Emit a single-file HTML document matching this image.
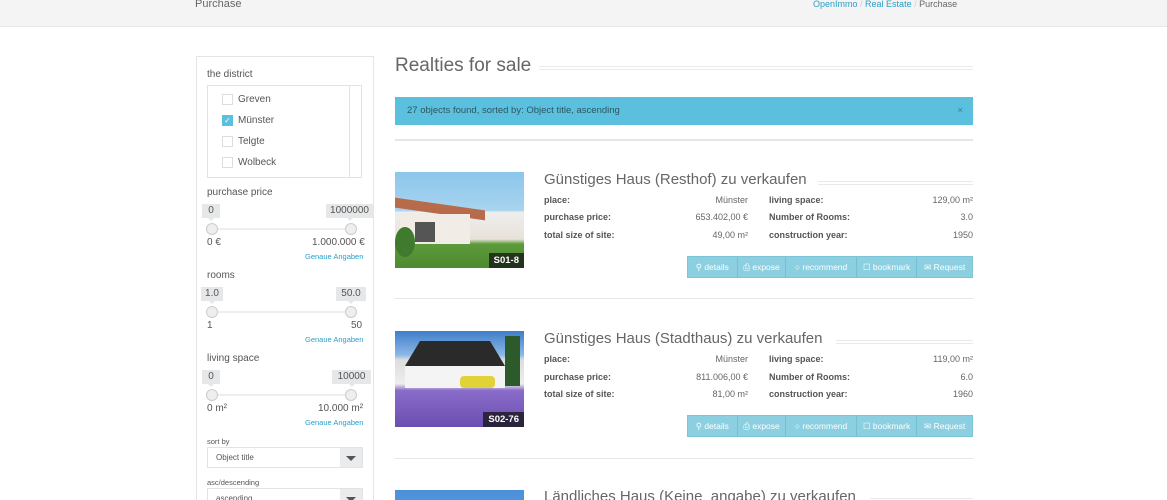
<!DOCTYPE html>
<html><head><meta charset="utf-8"><style>
*{box-sizing:border-box;margin:0;padding:0}
html,body{width:1167px;height:500px;overflow:hidden}
body{background:#fff;font-family:"Liberation Sans",sans-serif;color:#555;position:relative}
.top{position:absolute;left:0;top:0;width:1167px;height:27px;background:#f4f4f4;border-bottom:1px solid #e8e8e8}
.abs{position:absolute;white-space:nowrap}
.side{position:absolute;left:196px;top:56px;width:178px;height:460px;border:1px solid #e5e5e5}
.lbl{font-size:10px;color:#555}
.dist{position:absolute;left:207px;top:85px;width:155px;height:93px;border:1px solid #e3e3e3}
.dist .sb{position:absolute;right:0;top:0;width:12px;height:91px;border-left:1px solid #e3e3e3}
.cb{position:absolute;width:11px;height:11px;border:1px solid #ddd;background:#fff}
.tag{position:absolute;background:#e5e7e8;font-size:10px;color:#555;height:14px;line-height:14px;text-align:center}
.tag:after{content:"";position:absolute;left:50%;margin-left:-3px;bottom:-3px;border:3px solid transparent;border-top-color:#e5e7e8;border-bottom:0}
.track{position:absolute;height:2px;background:#eee}
.knob{position:absolute;width:12px;height:12px;border-radius:50%;background:#eee;border:1px solid #ccc}
.link{font-size:7.5px;color:#2a9fc9}
.sel{position:absolute;left:207px;width:156px;height:21px;border:1px solid #e3e3e3;font-size:8px;line-height:19px;padding-left:8px;color:#555}
.sel .ar{position:absolute;right:0;top:0;width:22px;height:19px;background:#e9ebec}
.sel .ar:after{content:"";position:absolute;left:6px;top:8px;border:5px solid transparent;border-top:5px solid #555}
.h2{font-size:19px;color:#666}
.dbl{position:absolute;height:4px;border-top:1px solid #eaeaea;border-bottom:1px solid #eaeaea}
.alert{position:absolute;left:395px;top:97px;width:578px;height:28px;background:#5bc0de;font-size:9.5px;color:#2d5563;line-height:28px;padding-left:12px}
.hr{position:absolute;left:395px;width:578px;height:1px;background:#e6e6e6}
.img{position:absolute;left:395px;width:129px;height:96px;overflow:hidden}
.code{position:absolute;right:0;bottom:0;background:rgba(20,20,20,.75);color:#fff;font-size:9.5px;padding:2px 5px;font-weight:bold}
.title{font-size:15px;color:#666}
.k{font-size:9px;font-weight:bold;color:#555}
.v{font-size:9px;color:#666;text-align:right}
.btns{position:absolute;left:687px;width:286px;height:22px;background:#8bcfe0;display:flex;font-size:8.5px;color:#fff;border:1px solid #7cc5d8}
.btns div{border-right:1px solid #75bfd3;line-height:20px;text-align:center}
.btns div:last-child{border-right:0}
</style></head><body>
<div class="top"></div>
<div class="abs" style="left:195px;top:-2px;font-size:11px;color:#666">Purchase</div>
<div class="abs" style="left:813px;top:-1px;font-size:9px;color:#2a9fc9">OpenImmo <span style="color:#ccc">/</span> Real Estate <span style="color:#ccc">/</span> <span style="color:#666">Purchase</span></div>

<div class="side"></div>
<div class="abs lbl" style="left:207px;top:69px">the district</div>
<div class="dist"><div class="sb"></div></div>
<div class="cb" style="left:222px;top:94px"></div><div class="abs lbl" style="left:238px;top:94px">Greven</div>
<div class="cb" style="left:222px;top:115px;background:#5bc0de;border-color:#5bc0de;color:#fff;font-size:8px;line-height:9px;text-align:center">✓</div><div class="abs lbl" style="left:238px;top:115px">Münster</div>
<div class="cb" style="left:222px;top:136px"></div><div class="abs lbl" style="left:238px;top:136px">Telgte</div>
<div class="cb" style="left:222px;top:157px"></div><div class="abs lbl" style="left:238px;top:157px">Wolbeck</div>

<div class="abs lbl" style="left:207px;top:187px">purchase price</div>
<div class="tag" style="left:202px;top:204px;width:18px">0</div><div class="tag" style="left:326px;top:204px;width:47px">1000000</div>
<div class="track" style="left:212px;top:228px;width:140px"></div>
<div class="knob" style="left:206px;top:223px"></div><div class="knob" style="left:345px;top:223px"></div>
<div class="abs lbl" style="left:207px;top:237px">0 €</div><div class="abs lbl" style="left:312px;top:237px">1.000.000 €</div>
<div class="abs link" style="left:305px;top:252px">Genaue Angaben</div>

<div class="abs lbl" style="left:207px;top:270px">rooms</div>
<div class="tag" style="left:201px;top:287px;width:22px">1.0</div><div class="tag" style="left:336px;top:287px;width:30px">50.0</div>
<div class="track" style="left:212px;top:311px;width:140px"></div>
<div class="knob" style="left:206px;top:306px"></div><div class="knob" style="left:345px;top:306px"></div>
<div class="abs lbl" style="left:207px;top:320px">1</div><div class="abs lbl" style="left:351px;top:320px">50</div>
<div class="abs link" style="left:305px;top:335px">Genaue Angaben</div>

<div class="abs lbl" style="left:207px;top:353px">living space</div>
<div class="tag" style="left:202px;top:370px;width:18px">0</div><div class="tag" style="left:332px;top:370px;width:39px">10000</div>
<div class="track" style="left:212px;top:394px;width:140px"></div>
<div class="knob" style="left:206px;top:389px"></div><div class="knob" style="left:345px;top:389px"></div>
<div class="abs lbl" style="left:207px;top:403px">0 m²</div><div class="abs lbl" style="left:318px;top:403px">10.000 m²</div>
<div class="abs link" style="left:305px;top:418px">Genaue Angaben</div>

<div class="abs" style="left:207px;top:437px;font-size:7.5px">sort by</div>
<div class="sel" style="top:447px">Object title<div class="ar"></div></div>
<div class="abs" style="left:207px;top:478px;font-size:7.5px">asc/descending</div>
<div class="sel" style="top:488px">ascending<div class="ar"></div></div>

<div class="abs h2" style="left:395px;top:55px">Realties for sale</div>
<div class="dbl" style="left:539px;top:66px;width:434px"></div>
<div class="alert">27 objects found, sorted by: Object title, ascending<span style="position:absolute;right:10px;color:#3a7f92">×</span></div>
<div class="hr" style="top:139px;height:2px"></div>

<!-- card 1 -->
<div class="img" style="top:172px;background:linear-gradient(#8cc6ec 0%,#a8d4ef 40%,#eee 42%,#e8e2d8 70%,#5c9a3a 75%,#4d8a30 100%)">
<div style="position:absolute;left:0;top:32px;width:90px;height:10px;background:#b76b4a;transform:skewY(8deg)"></div>
<div style="position:absolute;left:5px;top:42px;width:70px;height:30px;background:#f1ede6"></div>
<div style="position:absolute;left:20px;top:50px;width:20px;height:20px;background:#555"></div>
<div style="position:absolute;left:0;top:55px;width:20px;height:30px;background:#3f7a2e;border-radius:50%"></div>
<div class="code">S01-8</div></div>
<div class="abs title" style="left:544px;top:171px">Günstiges Haus (Resthof) zu verkaufen</div>
<div class="dbl" style="left:818px;top:181px;width:155px"></div>
<div class="abs k" style="left:544px;top:195px">place:</div><div class="abs v" style="left:648px;top:195px;width:100px">Münster</div>
<div class="abs k" style="left:544px;top:212px">purchase price:</div><div class="abs v" style="left:648px;top:212px;width:100px">653.402,00 €</div>
<div class="abs k" style="left:544px;top:230px">total size of site:</div><div class="abs v" style="left:648px;top:230px;width:100px">49,00 m²</div>
<div class="abs k" style="left:769px;top:195px">living space:</div><div class="abs v" style="left:873px;top:195px;width:100px">129,00 m²</div>
<div class="abs k" style="left:769px;top:212px">Number of Rooms:</div><div class="abs v" style="left:873px;top:212px;width:100px">3.0</div>
<div class="abs k" style="left:769px;top:230px">construction year:</div><div class="abs v" style="left:873px;top:230px;width:100px">1950</div>
<div class="btns" style="top:256px"><div style="width:50px">⚲ details</div><div style="width:49px">⎙ expose</div><div style="width:71px">○ recommend</div><div style="width:61px">☐ bookmark</div><div style="width:55px">✉ Request</div></div>
<div class="hr" style="top:298px"></div>

<!-- card 2 -->
<div class="img" style="top:331px;background:linear-gradient(#3f7ec9 0%,#8cb8e6 25%,#ddd 30%,#eee 55%,#8a6cc9 62%,#6a4fb0 100%)">
<div style="position:absolute;left:10px;top:10px;width:100px;height:25px;background:#2a2a2a;clip-path:polygon(15% 0,85% 0,100% 100%,0 100%)"></div>
<div style="position:absolute;left:10px;top:35px;width:100px;height:22px;background:#f4f4f4"></div>
<div style="position:absolute;left:65px;top:45px;width:35px;height:12px;background:#e2d23a;border-radius:4px"></div>
<div style="position:absolute;left:110px;top:5px;width:15px;height:50px;background:#2c5a2a"></div>
<div class="code">S02-76</div></div>
<div class="abs title" style="left:544px;top:330px">Günstiges Haus (Stadthaus) zu verkaufen</div>
<div class="dbl" style="left:836px;top:340px;width:137px"></div>
<div class="abs k" style="left:544px;top:354px">place:</div><div class="abs v" style="left:648px;top:354px;width:100px">Münster</div>
<div class="abs k" style="left:544px;top:372px">purchase price:</div><div class="abs v" style="left:648px;top:372px;width:100px">811.006,00 €</div>
<div class="abs k" style="left:544px;top:389px">total size of site:</div><div class="abs v" style="left:648px;top:389px;width:100px">81,00 m²</div>
<div class="abs k" style="left:769px;top:354px">living space:</div><div class="abs v" style="left:873px;top:354px;width:100px">119,00 m²</div>
<div class="abs k" style="left:769px;top:372px">Number of Rooms:</div><div class="abs v" style="left:873px;top:372px;width:100px">6.0</div>
<div class="abs k" style="left:769px;top:389px">construction year:</div><div class="abs v" style="left:873px;top:389px;width:100px">1960</div>
<div class="btns" style="top:415px"><div style="width:50px">⚲ details</div><div style="width:49px">⎙ expose</div><div style="width:71px">○ recommend</div><div style="width:61px">☐ bookmark</div><div style="width:55px">✉ Request</div></div>
<div class="hr" style="top:458px"></div>

<!-- card 3 -->
<div class="img" style="top:490px;background:linear-gradient(#4a90d9,#7fb3e6)"></div>
<div class="abs title" style="left:544px;top:488px">Ländliches Haus (Keine_angabe) zu verkaufen</div>
<div class="dbl" style="left:870px;top:498px;width:103px"></div>
</body></html>
